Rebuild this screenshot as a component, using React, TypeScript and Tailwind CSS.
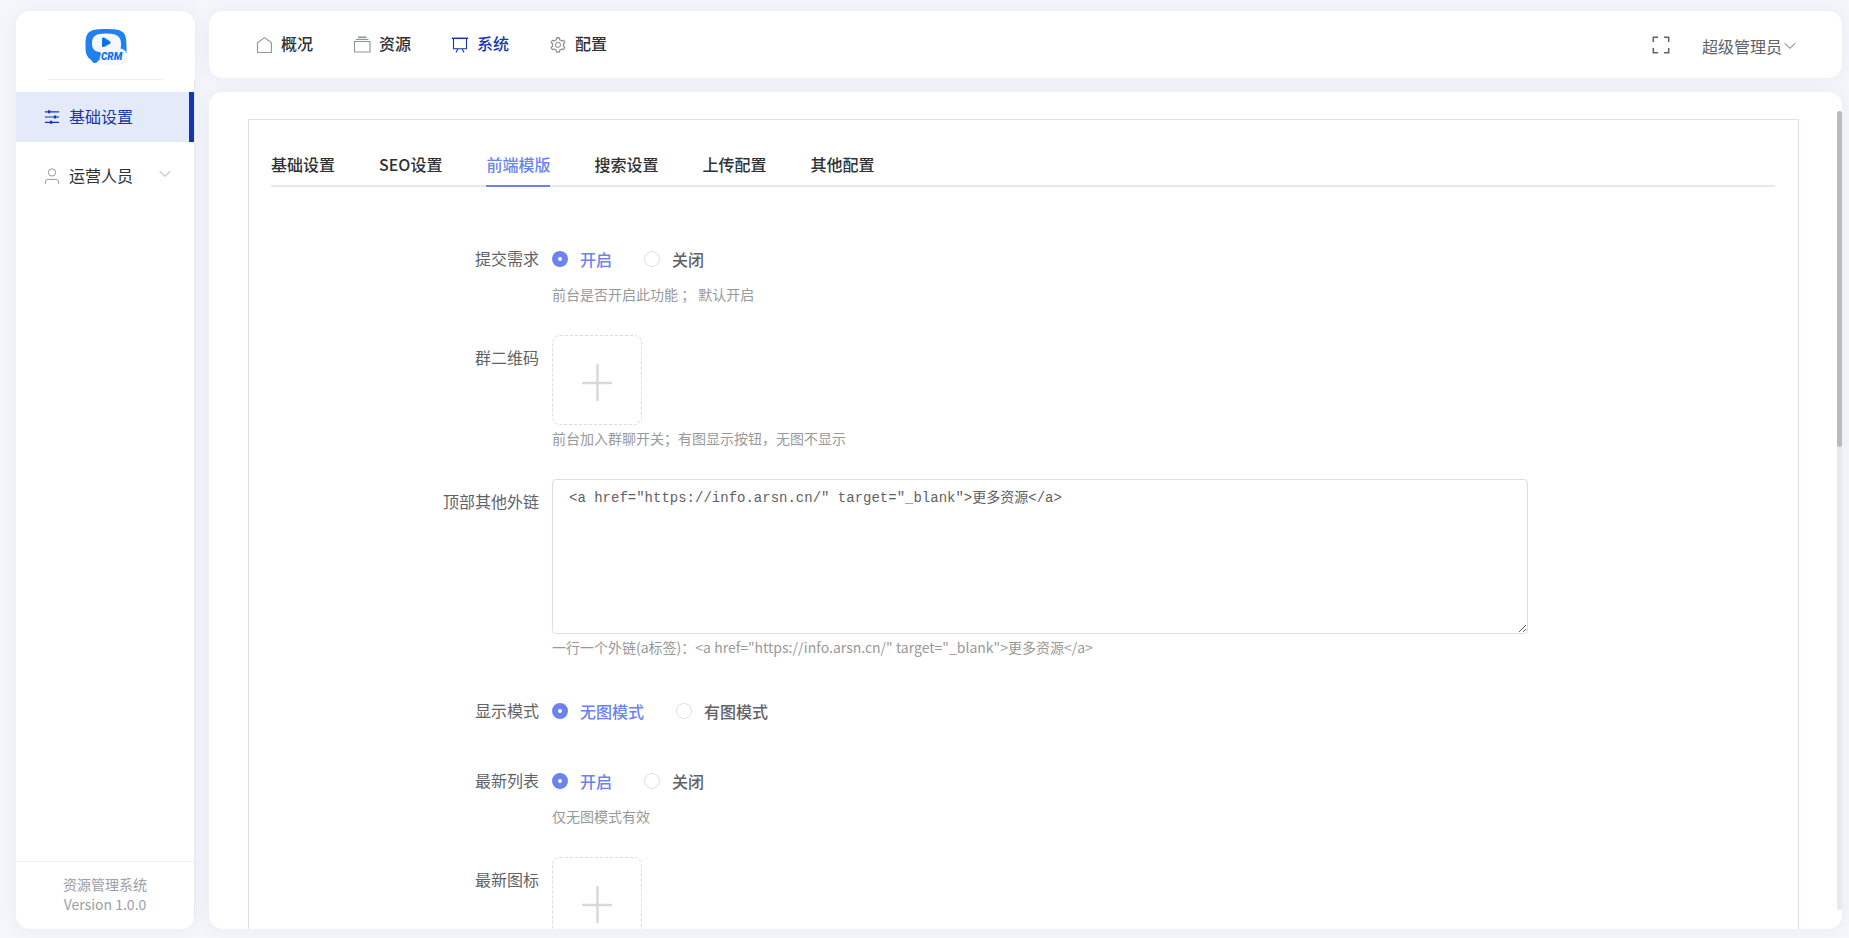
import { ReactNode } from "react";
import { AiOutlineSetting } from "react-icons/ai";

type IconProps = { children: ReactNode; size?: string };

const Icon = ({ children, size = "size-[18px]" }: IconProps) => (
  <svg viewBox="0 0 18 18" fill="none" stroke="currentColor" strokeWidth="1.1" className={`${size} shrink-0`} aria-hidden="true">
    {children}
  </svg>
);

const HomeIcon = () => (
  <Icon>
    <path d="M2.5 16.5V6.8L9.5 1.6l6.9 5.2v9.7z" />
  </Icon>
);

const BoxIcon = () => (
  <Icon>
    <path d="M1.5 5.500h15.500v10.500H1.500z" />
    <path d="M3 3.500h12.500" />
    <path d="M5 1.300h8.500" strokeWidth="1.600" />
  </Icon>
);

const BoardIcon = () => (
  <Icon>
    <path d="M.800 2.300h16.400" strokeWidth="1.500" />
    <path d="M2.500 2.500v10.200h13V2.500M6.800 12.900l-1.800 3.600M11.200 12.900l1.800 3.600" />
  </Icon>
);

const FullscreenIcon = () => (
  <Icon>
    <path d="M1.300 6V1.300H6M12 1.300h4.700V6M16.700 12v4.700H12M6 16.700H1.300V12" strokeWidth="1.500" />
  </Icon>
);

const SlidersIcon = () => (
  <Icon size="size-4">
    <path d="M1 3.200h16M1 9h16M1 15h16" strokeWidth="1.300" />
    <path d="M5.800 1.500v3.400M12.500 7.300v3.400M8 13.300v3.400" strokeWidth="2.600" />
  </Icon>
);

const UserIcon = () => (
  <Icon size="size-4">
    <circle cx="9" cy="5" r="4.100" />
    <path d="M1.500 18v-2c0-2 1.500-3.200 3.500-3.200h8c2 0 3.500 1.200 3.500 3.200v2" />
  </Icon>
);

const ChevronIcon = () => (
  <svg viewBox="0 0 12 8" fill="none" stroke="currentColor" className="h-2 w-3 shrink-0" aria-hidden="true">
    <path d="M.800 1.200L6 6.400l5.200-5.200" />
  </svg>
);

const Logo = () => (
  <svg viewBox="0 0 44 38" className="h-[38px] w-11" role="img" aria-label="CRM">
    <path
      d="M1.500 18C1.500 4 4 1 22 1s20.500 3 20.500 17v7L30 32H15c-1 2-3.500 4-6 2.500L7 32C3 29 1.500 26 1.500 18z"
      fill="#2080f0"
    />
    <path
      d="M22 5.500c-11 0-14 3-14 10 0 5 2 8 8 8.500l1 2c-3 6-1 11 5 11h13c8 0 9-7 7-13-1-2-3-3-5.500-3.500.500-2 .500-3 .500-5 0-7-4-10-15-10z"
      fill="#f7f8ff"
    />
    <path d="M18 11c0-1.500 1-2 2.500-1.300l5 3.200c1.500 1 1.500 2.200 0 3.200l-5 2.700c-1.500.7-2.500.2-2.500-1.300z" fill="#0a70f5" />
    <text x="17" y="32" fontSize="10" fontStyle="italic" fontWeight="900" fontFamily="Roboto, 'Liberation Sans', sans-serif" fill="#0a70f5">
      CRM
    </text>
  </svg>
);

const navItems = [
  { name: "概况", icon: <HomeIcon />, active: false },
  { name: "资源", icon: <BoxIcon />, active: false },
  { name: "系统", icon: <BoardIcon />, active: true },
  { name: "配置", icon: <AiOutlineSetting className="size-[18px]" />, active: false },
];

const tabs = ["基础设置", "SEO设置", "前端模版", "搜索设置", "上传配置", "其他配置"];
const activeTab = "前端模版";

const linkSample = '<a href="https://info.arsn.cn/" target="_blank">更多资源</a>';

const Sidebar = () => (
  <aside className="flex w-[179px] shrink-0 flex-col overflow-hidden rounded-[14px] bg-white shadow-[0_0_16px_rgba(80,80,160,0.07)]">
    <div className="mx-8 flex h-[69px] shrink-0 items-center justify-center border-b border-[#efeff1] pt-1">
      <Logo />
    </div>
    <div className="flex min-h-0 flex-1 flex-col border-r border-[#e6e6e8] pt-3">
      <nav className="flex flex-1 flex-col gap-[9px]">
        <a href="#basic" className="flex h-[50px] items-center gap-[9px] border-r-[5px] border-[#1337ae] bg-[#e5eafa] pl-7 text-[#1337ae]">
          <SlidersIcon />
          <span className="pb-[2px]">基础设置</span>
        </a>
        <a href="#staff" className="flex h-[50px] items-center gap-[9px] pl-7 pr-[23px] text-[#303133]">
          <span className="text-[#909399]">
            <UserIcon />
          </span>
          <span className="flex-1 pb-[2px]">运营人员</span>
          <span className="pb-1 text-[#a0a2a8]">
            <ChevronIcon />
          </span>
        </a>
      </nav>
      <footer className="border-t border-[#efeff1] pt-3 pb-[15px] text-center text-[14px] leading-5 text-[#9b9ea5]">
        <p>资源管理系统</p>
        <p>Version 1.0.0</p>
      </footer>
    </div>
  </aside>
);

const Header = () => (
  <header className="flex h-[67px] shrink-0 items-center justify-between rounded-[14px] bg-white px-[46px] shadow-[0_0_16px_rgba(80,80,160,0.07)]">
    <nav className="flex gap-10 font-medium">
      {navItems.map((item) => (
        <a key={item.name} href="#nav" className={`flex items-center gap-2 ${item.active ? "text-[#1337ae]" : "text-[#303133]"}`}>
          <span className={item.active ? "text-[#1337ae]" : "text-[#909399]"}>{item.icon}</span>
          <span className="pb-[3px]">{item.name}</span>
        </a>
      ))}
    </nav>
    <div className="flex items-center gap-8 text-[#606266]">
      <button type="button" aria-label="全屏">
        <FullscreenIcon />
      </button>
      <button type="button" className="flex items-center gap-[2px] pt-[2px]">
        超级管理员
        <ChevronIcon />
      </button>
    </div>
  </header>
);

type RowProps = { label: string; htmlFor?: string; help?: string; children: ReactNode };

const Row = ({ label, htmlFor, help, children }: RowProps) => (
  <div className="mb-6 flex">
    <label htmlFor={htmlFor} className="w-[281px] shrink-0 pr-[13px] text-right leading-[44px]">
      {label}
    </label>
    <div className="min-w-0 flex-1">
      {children}
      {help && <p className="pb-1 text-[14px] leading-[25px] text-[#999999]">{help}</p>}
    </div>
  </div>
);

const Radios = ({ name, options }: { name: string; options: string[] }) => (
  <div className="flex h-[46px] items-center gap-8 font-medium" role="radiogroup">
    {options.map((option, i) => (
      <label key={option} className="flex items-center gap-3 has-checked:text-[#6b83f0]">
        <input
          type="radio"
          name={name}
          defaultChecked={i === 0}
          className="size-4 appearance-none rounded-full border border-[#dcdfe6] bg-white checked:border-[6px] checked:border-[#6b83f0]"
        />
        {option}
      </label>
    ))}
  </div>
);

const Upload = ({ id }: { id: string }) => (
  <button id={id} type="button" className="mb-px flex size-[90px] items-center justify-center rounded-lg border border-dashed border-[#dcdcdc] pt-1 text-[#d9d9d9]">
    <svg viewBox="0 0 30 38" className="h-[38px] w-[30px]" stroke="currentColor" strokeWidth="2.500" aria-hidden="true">
      <path d="M0 20h30M15.500 1v37" />
    </svg>
  </button>
);

const App = () => {
  return (
    <div className="flex h-screen gap-[14px] bg-[#f5f6fb] pt-[11px] pr-[7px] pb-[9px] pl-4 font-['Noto_Sans_CJK_SC',sans-serif] text-[16px] leading-6 text-[#606266]">
      <Sidebar />
      <div className="flex min-w-0 flex-1 flex-col gap-[14px]">
        <Header />
        <main className="relative flex min-h-0 flex-1 flex-col overflow-hidden rounded-[14px] bg-white shadow-[0_0_16px_rgba(80,80,160,0.07)]">
          <div className="min-h-0 flex-1 overflow-y-auto pt-[27px] pr-[43px] pl-[39px] [scrollbar-width:none]">
            <section className="border border-[#dcdfe6] pt-7 pr-[23px] pb-10 pl-[22px]">
              <div role="tablist" className="flex gap-11 border-b-2 border-[#e4e7ed] font-medium">
                {tabs.map((tab) => (
                  <button
                    key={tab}
                    type="button"
                    role="tab"
                    aria-selected={tab === activeTab}
                    className="-mb-[2px] h-[39px] border-b-2 border-transparent pb-[6px] text-[#303133] aria-selected:border-[#6b83f0] aria-selected:text-[#6b83f0]"
                  >
                    {tab}
                  </button>
                ))}
              </div>
              <form className="mt-[49px] pr-[16.4%]">
                <Row label="提交需求" help="前台是否开启此功能 ； 默认开启">
                  <Radios name="demand" options={["开启", "关闭"]} />
                </Row>
                <Row label="群二维码" htmlFor="qrcode" help="前台加入群聊开关；有图显示按钮，无图不显示">
                  <Upload id="qrcode" />
                </Row>
                <Row label="顶部其他外链" htmlFor="links" help={`一行一个外链(a标签)：${linkSample}`}>
                  <textarea
                    id="links"
                    spellCheck={false}
                    defaultValue={linkSample}
                    className="mb-px block h-[155px] w-full resize rounded-sm border border-[#dcdfe6] px-4 py-2 font-['Liberation_Mono','Noto_Sans_CJK_SC',monospace] text-[14px] leading-5"
                  />
                </Row>
                <Row label="显示模式">
                  <Radios name="mode" options={["无图模式", "有图模式"]} />
                </Row>
                <Row label="最新列表" help="仅无图模式有效">
                  <Radios name="latest" options={["开启", "关闭"]} />
                </Row>
                <Row label="最新图标" htmlFor="latest-icon">
                  <Upload id="latest-icon" />
                </Row>
              </form>
            </section>
          </div>
          {/* scroll track and thumb float over the right edge */}
          <div className="absolute top-[19px] right-0 bottom-[19px] w-[5px] rounded-full bg-[#e9e9e9]">
            <div className="h-[42%] rounded-full bg-[#bbbbbb]" />
          </div>
        </main>
      </div>
    </div>
  );
};

export default App;
